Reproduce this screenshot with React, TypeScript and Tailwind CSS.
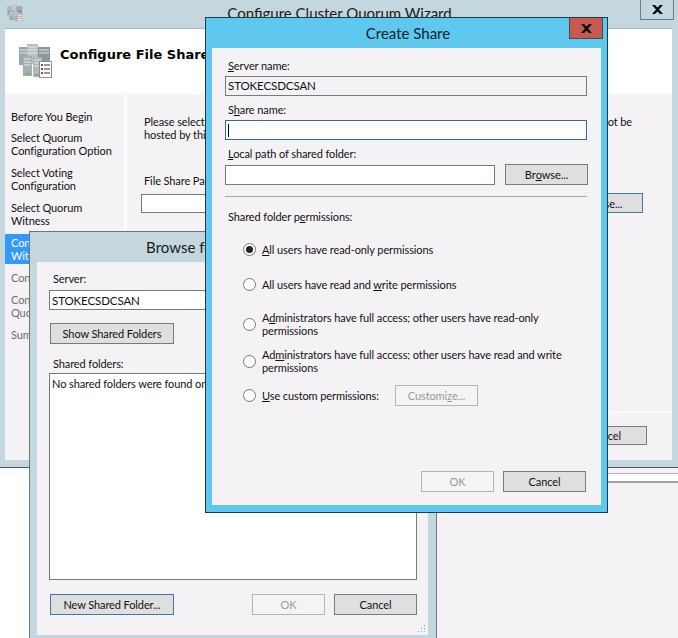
const font = "font-['Lato','Liberation_Sans',sans-serif]";

const Btn = ({ label, focused = false, className = '' }: { label: React.ReactNode; focused?: boolean; className?: string }) => (
  <div className={`flex items-center justify-center border bg-[#dfdfdf] text-[#111] text-[11px] tracking-[-0.1px] leading-[13px] ${focused ? 'border-[#3f78a8]' : 'border-[#7a7a7a]'} ${className}`}>
    {label}
  </div>
);

const DisabledBtn = ({ label, className = '' }: { label: React.ReactNode; className?: string }) => (
  <div className={`flex items-center justify-center border bg-[#f4f4f4] border-[#b4b4b4] text-[#9a9a9a] text-[11px] tracking-[-0.1px] leading-[13px] ${className}`}>
    {label}
  </div>
);

const CloseGlyph = () => (
  <svg width="13" height="9" viewBox="0 0 13 9">
    <path d="M1 0h3l2.500 2.600L9 0h3L8 4.500 12 9H9L6.500 6.400 4 9H1l4-4.500z" fill="#0b0b0b" />
  </svg>
);

const ServerIcon = ({ size }: { size: number }) => (
  <svg width={size} height={size} viewBox="0 0 34 34">
    <rect x="1" y="3" width="9" height="18" fill="#9aa5a8" />
    <rect x="9" y="0" width="11" height="20" fill="#b7c0c2" />
    <rect x="20" y="3" width="12" height="16" fill="#8d9699" />
    <rect x="5" y="12" width="9" height="20" fill="#a5afb2" />
    <rect x="15" y="13" width="9" height="20" fill="#aeb7ba" />
    <path d="M2 6h7M2 9h7M10 3h9M10 6h9M10 9h9M21 6h10M21 9h10M6 15h7M6 18h7M6 21h7M16 16h7M16 19h7M16 22h7" stroke="#e4e8e9" strokeWidth="1" />
    <path d="M7 30h6M17 31h6" stroke="#7fb56a" strokeWidth="2" />
    <rect x="21.500" y="17.500" width="12" height="16" fill="#fff" stroke="#8a8f92" />
    <path d="M23 21h2M23 25h2M23 29h2" stroke="#b03a3a" strokeWidth="2" />
    <path d="M26 21h6M26 25h6M26 29h6" stroke="#333" strokeWidth="1" />
  </svg>
);

const Radio = ({ checked = false }: { checked?: boolean }) => (
  <div className="flex h-[13px] w-[13px] shrink-0 items-center justify-center rounded-full border border-[#777] bg-white">
    {checked && <div className="h-[7px] w-[7px] rounded-full bg-[#222]" />}
  </div>
);

const steps = [
  { text: 'Before You Begin', first: true },
  { text: <>Select Quorum<br />Configuration Option</> },
  { text: <>Select Voting<br />Configuration</> },
  { text: <>Select Quorum<br />Witness</> },
  { text: <>Configure File Share<br />Witness</>, active: true },
  { text: 'Confirmation', muted: true },
  { text: <>Configure Cluster<br />Quorum Settings</>, muted: true },
  { text: 'Summary', muted: true },
];

const Wizard = () => (
  <div className="absolute left-0 top-0 flex h-[468px] w-[678px] flex-col border-b border-[#4a5a60] bg-[#c5d7de] pl-[5px] pr-[6px]">
    <div className="flex h-[28px] items-start">
      <div className="pt-[5px] pl-[2px]"><ServerIcon size={16} /></div>
      <div className="flex-1 pt-[3px] pr-[16px] text-center text-[15px] leading-[20px] text-[#1a1a1a]">Configure Cluster Quorum Wizard</div>
    </div>
    <div className="absolute right-[4px] top-0 flex h-[20px] w-[34px] items-center justify-center border-x border-b border-[#6d7f86]"><CloseGlyph /></div>

    <div className="flex h-[64px] items-center gap-[8px] border-t border-[#a8b8bf] bg-white pl-[13px]">
      <ServerIcon size={34} />
      <div className="-mt-[12px] font-['DejaVu_Sans',sans-serif] text-[13px] font-bold text-black">Configure File Share Witness</div>
    </div>

    <div className="flex h-[368px] bg-[#fcfbfc] pt-[3px]">
      <div className="flex w-[119px] flex-col gap-[9px] bg-[#f5f2f6] pt-[15px] text-[11px] tracking-[-0.1px] leading-[13px] text-[#111]">
        {steps.map((s, i) => (
          <div
            key={i}
            className={s.active ? '-my-[2px] bg-[#3399ff] py-[2px] pl-[6px] text-white' : s.muted ? 'pl-[6px] text-[#6d6d6d]' : s.first ? '-mb-[1px] pl-[6px]' : 'pl-[6px]'}
          >
            {s.text}
          </div>
        ))}
      </div>
      <div className="ml-[3px] flex flex-1 flex-col bg-[#f5f2f6] text-[11px] tracking-[-0.1px] leading-[13px] text-[#111]">
        <div className="h-[318px] border-b border-white pr-[40px] pl-[17px] pt-[20px]">
          <div className="flex justify-between"><span>Please select a file share that will be used by the witness</span><span>not be</span></div>
          <div>hosted by this cluster.</div>
          <div className="mt-[33px]">File Share Path:</div>
          <div className="mt-[6px] flex items-center gap-[10px] -ml-[3px] -mr-[11px]">
            <div className="h-[19px] flex-1 border border-[#7a7a7a] bg-white" />
            <Btn label="Browse..." focused className="h-[20px] w-[84px]" />
          </div>
        </div>
        <div className="flex justify-end pr-[25px] pt-[13px]">
          <Btn label="Cancel" className="h-[19px] w-[84px]" />
        </div>
      </div>
    </div>
  </div>
);

const BrowseWindow = () => (
  <div className="absolute left-[29px] top-[231px] flex h-[407px] w-[408px] flex-col border-x border-t border-[#6a7679] bg-[#c5d7de] pl-[7px] pr-[8px] pb-[3px]">
    <div className="flex h-[30px] items-center justify-center text-[15px] text-[#1a1a1a]">Browse for Shared Folders</div>
    <div className="flex flex-1 flex-col bg-[#f5f2f6] pl-[12px] pr-[11px] pt-[10px] text-[11px] tracking-[-0.1px] leading-[13px] text-[#111]">
      <div className="pl-[4px]">Server:</div>
      <div className="mt-[5px] flex h-[20px] items-center border border-[#7a7a7a] bg-white pl-[2px] text-[11.500px]">STOKECSDCSAN</div>
      <Btn label="Show Shared Folders" className="mt-[13px] ml-[1px] h-[21px] w-[124px]" />
      <div className="mt-[13px] pl-[4px]">Shared folders:</div>
      <div className="mt-[3px] h-[207px] border border-[#7a7a7a] bg-white pl-[2px] pt-[3px]">No shared folders were found on the server.</div>
      <div className="mt-[14px] flex items-center pl-[1px]">
        <Btn label="New Shared Folder..." focused className="h-[21px] w-[124px]" />
        <DisabledBtn label="OK" className="ml-auto h-[21px] w-[73px]" />
        <Btn label="Cancel" className="ml-[9px] h-[21px] w-[83px]" />
      </div>
      <div className="mt-[9px] flex justify-end -mr-[9px]">
        <svg width="9" height="9" viewBox="0 0 9 9" fill="#9aa5a8">
          <rect x="7" y="1" width="1" height="1" /><rect x="4" y="4" width="1" height="1" /><rect x="7" y="4" width="1" height="1" />
          <rect x="1" y="7" width="1" height="1" /><rect x="4" y="7" width="1" height="1" /><rect x="7" y="7" width="1" height="1" />
        </svg>
      </div>
    </div>
  </div>
);

const perms = [
  { id: 1, text: <><u>A</u>ll users have read-only permissions</>, checked: true, mt: 'mt-[20px]' },
  { id: 2, text: <>All users have read and <u>w</u>rite permissions</>, mt: 'mt-[22px]' },
  { id: 3, text: <>A<u>d</u>ministrators have full access; other users have read-only<br />permissions</>, mt: 'mt-[20px]' },
  { id: 4, text: <>Ad<u>m</u>inistrators have full access; other users have read and write<br />permissions</>, mt: 'mt-[11px]' },
];

const CreateShare = () => (
  <div className="absolute left-[205px] top-[17px] flex h-[496px] w-[403px] flex-col border border-[#1d3a4a] bg-[#5fc8ef] px-[6px] pb-[7px]">
    <div className="flex h-[30px] items-center justify-center pl-[3px] pt-[1px] text-[15px] text-[#10222c]">Create Share</div>
    <div className="absolute right-[4px] top-0 flex h-[21px] w-[34px] items-center justify-center border-x border-b border-[#3d4d55] bg-[#c75950]"><CloseGlyph /></div>
    <div className="flex flex-1 flex-col bg-[#f5f2f6] pl-[13px] pr-[14px] pt-[11px] text-[11px] tracking-[-0.1px] leading-[13px] text-[#111]">
      <div className="pl-[3px]"><u>S</u>erver name:</div>
      <div className="mt-[4px] flex h-[20px] items-center border border-[#7a7a7a] pb-[1px] pl-[2px] text-[11.500px]">STOKECSDCSAN</div>
      <div className="mt-[7px] pl-[3px]">S<u>h</u>are name:</div>
      <div className="mt-[4px] flex h-[20px] items-center border border-[#3a6d8c] bg-white pl-[2px]">
        <div className="h-[13px] w-[1px] bg-black" />
      </div>
      <div className="mt-[7px] pl-[3px]"><u>L</u>ocal path of shared folder:</div>
      <div className="mt-[4px] flex items-center">
        <div className="h-[20px] w-[270px] border border-[#7a7a7a] bg-white" />
        <Btn label={<>Br<u>o</u>wse...</>} className="ml-[10px] h-[21px] w-[83px] -mr-[1px]" />
      </div>
      <div className="mt-[11px] h-[1px] bg-[#a9a6aa]" />
      <div className="mt-[13px] pl-[3px]">Shared folder p<u>e</u>rmissions:</div>
      {perms.map(p => (
        <div key={p.id} className={`flex items-center gap-[6px] pl-[18px] ${p.mt}`}>
          <Radio checked={p.checked} />
          <div>{p.text}</div>
        </div>
      ))}
      <div className="mt-[11px] flex items-center gap-[6px] pl-[18px]">
        <Radio />
        <div className="w-[127px]"><u>U</u>se custom permissions:</div>
        <DisabledBtn label={<>Customi<u>z</u>e...</>} className="h-[21px] w-[83px]" />
      </div>
      <div className="mt-auto mb-[13px] mr-[1px] flex justify-end gap-[9px]">
        <DisabledBtn label="OK" className="h-[21px] w-[73px]" />
        <Btn label="Cancel" className="h-[21px] w-[83px]" />
      </div>
    </div>
  </div>
);

export default function App() {
  return (
    <div className={`relative h-[638px] w-[678px] overflow-hidden bg-[#f5f2f6] ${font}`}>
      {/* windows behind the wizard */}
      <div className="absolute left-0 top-[467px] h-[171px] w-[40px] bg-white" />
      <div className="absolute left-[430px] top-[473px] h-[10px] w-[248px] border-t border-b-2 border-t-[#b9b9b9] border-b-[#a3a3a3] bg-white" />
      <Wizard />
      <BrowseWindow />
      <CreateShare />
    </div>
  );
}
